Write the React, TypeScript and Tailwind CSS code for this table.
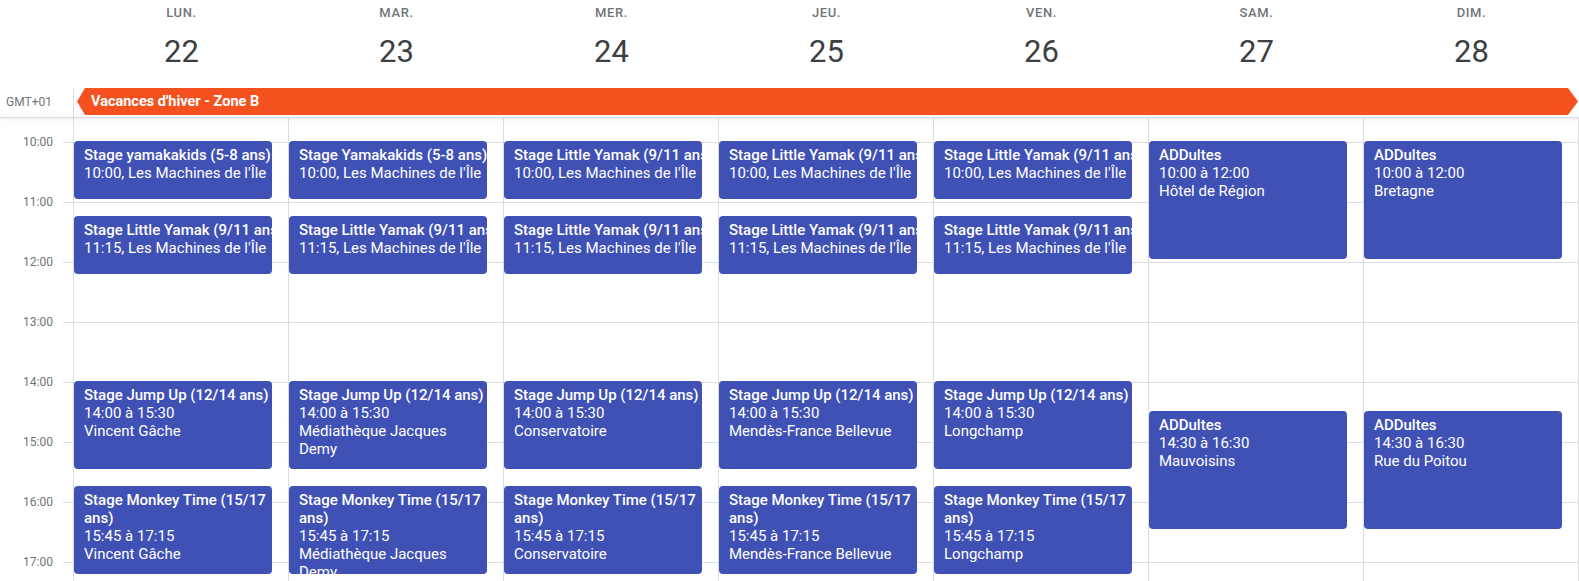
import React from 'react';

type CalEvent = {
  start: number;
  end: number;
  title: string;
  lines: string[];
  compact?: boolean;
};

const DAYS = [
  { label: 'LUN.', date: 22 },
  { label: 'MAR.', date: 23 },
  { label: 'MER.', date: 24 },
  { label: 'JEU.', date: 25 },
  { label: 'VEN.', date: 26 },
  { label: 'SAM.', date: 27 },
  { label: 'DIM.', date: 28 },
];

const HOURS = [10, 11, 12, 13, 14, 15, 16, 17];

const stageDay = (first: string, place: string): CalEvent[] => [
  { start: 10, end: 11, title: first, lines: ["10:00, Les Machines de l'Île"], compact: true },
  { start: 11.25, end: 12.25, title: 'Stage Little Yamak (9/11 ans)', lines: ["11:15, Les Machines de l'Île"], compact: true },
  { start: 14, end: 15.5, title: 'Stage Jump Up (12/14 ans)', lines: ['14:00 à 15:30', place] },
  { start: 15.75, end: 17.25, title: 'Stage Monkey Time (15/17 ans)', lines: ['15:45 à 17:15', place] },
];

const weekendDay = (morning: string, afternoon: string): CalEvent[] => [
  { start: 10, end: 12, title: 'ADDultes', lines: ['10:00 à 12:00', morning] },
  { start: 14.5, end: 16.5, title: 'ADDultes', lines: ['14:30 à 16:30', afternoon] },
];

const EVENTS: CalEvent[][] = [
  stageDay('Stage yamakakids (5-8 ans)', 'Vincent Gâche'),
  stageDay('Stage Yamakakids (5-8 ans)', 'Médiathèque Jacques Demy'),
  stageDay('Stage Little Yamak (9/11 ans)', 'Conservatoire'),
  stageDay('Stage Little Yamak (9/11 ans)', 'Mendès-France Bellevue'),
  stageDay('Stage Little Yamak (9/11 ans)', 'Longchamp'),
  weekendDay('Hôtel de Région', 'Mauvoisins'),
  weekendDay('Bretagne', 'Rue du Poitou'),
];

// 10:00 sits 24px below the top of the scroll area, 60px per hour
const toY = (h: number) => 24 + (h - 10) * 60;

const EventCard: React.FC<{ ev: CalEvent }> = ({ ev }) => {
  const top = toY(ev.start) - 1;
  const height = (ev.end - ev.start) * 60 - 2;
  return (
    <div
      className="absolute left-0 right-[16px] bg-[#3f51b5] rounded-[4px] overflow-hidden text-white text-[15px] leading-[18px] pl-[10px] pt-[5px]"
      style={{ top, height }}
    >
      <div className={ev.compact ? 'font-medium whitespace-nowrap' : 'font-medium'}>{ev.title}</div>
      {ev.lines.map((l, i) => (
        <div key={i} className={ev.compact ? 'whitespace-nowrap' : ''}>
          {l}
        </div>
      ))}
    </div>
  );
};

const App: React.FC = () => {
  return (
    <div className="w-[1579px] h-[581px] overflow-hidden bg-white font-['Roboto',sans-serif] text-[#3c4043]">
      {/* day headers */}
      <div className="flex h-[88px]">
        <div className="w-[74px] shrink-0" />
        <div className="flex-1 grid grid-cols-7">
          {DAYS.map(d => (
            <div key={d.label} className="flex flex-col items-center">
              <div className="mt-[5px] text-[13px] leading-[16px] tracking-[0.6px] font-medium text-[#70757a]">
                {d.label}
              </div>
              <div className="mt-[13px] text-[31px] leading-[36px] text-[#3c4043]">{d.date}</div>
            </div>
          ))}
        </div>
      </div>

      {/* all-day row */}
      <div className="flex h-[29px]">
        <div className="w-[74px] shrink-0 border-r border-[#dadce0] flex items-center pl-[6px] pb-[1px] text-[12px] text-[#70757a]">
          GMT+01
        </div>
        <div className="flex-1 pl-[3px] pr-[1px]">
          <div className="h-[27px] bg-[#f4511e] flex items-center pl-[14px] text-white text-[14.5px] font-bold [clip-path:polygon(8px_0,calc(100%-10px)_0,100%_50%,calc(100%-10px)_100%,8px_100%,0_50%)]">
            Vacances d'hiver - Zone B
          </div>
        </div>
      </div>
      <div className="h-[1px] bg-[#dadce0] shadow-[0_1px_3px_rgba(60,64,67,0.2)] relative z-10" />

      {/* time grid */}
      <div className="flex h-[463px]">
        <div className="w-[63px] shrink-0 text-[12px] leading-[14px] text-[#70757a]">
          <div className="h-[24px]" />
          {HOURS.map(h => (
            <div key={h} className="h-[60px] flex flex-col items-end pr-[10px]">
              <div className="-mt-[7px]">{h}:00</div>
            </div>
          ))}
        </div>
        <div className="w-[11px] shrink-0 border-r border-[#dadce0]">
          <div className="h-[24px]" />
          {HOURS.map(h => (
            <div key={h} className="h-[60px] border-t border-[#dadce0]" />
          ))}
        </div>
        <div className="flex-1 grid grid-cols-7">
          {EVENTS.map((col, ci) => (
            <div key={ci} className="relative border-r border-[#dadce0]">
              <div className="h-[24px]" />
              {HOURS.map(h => (
                <div key={h} className="h-[60px] border-t border-[#dadce0]" />
              ))}
              {col.map((ev, ei) => (
                <EventCard key={ei} ev={ev} />
              ))}
            </div>
          ))}
        </div>
      </div>
    </div>
  );
};

export default App;
